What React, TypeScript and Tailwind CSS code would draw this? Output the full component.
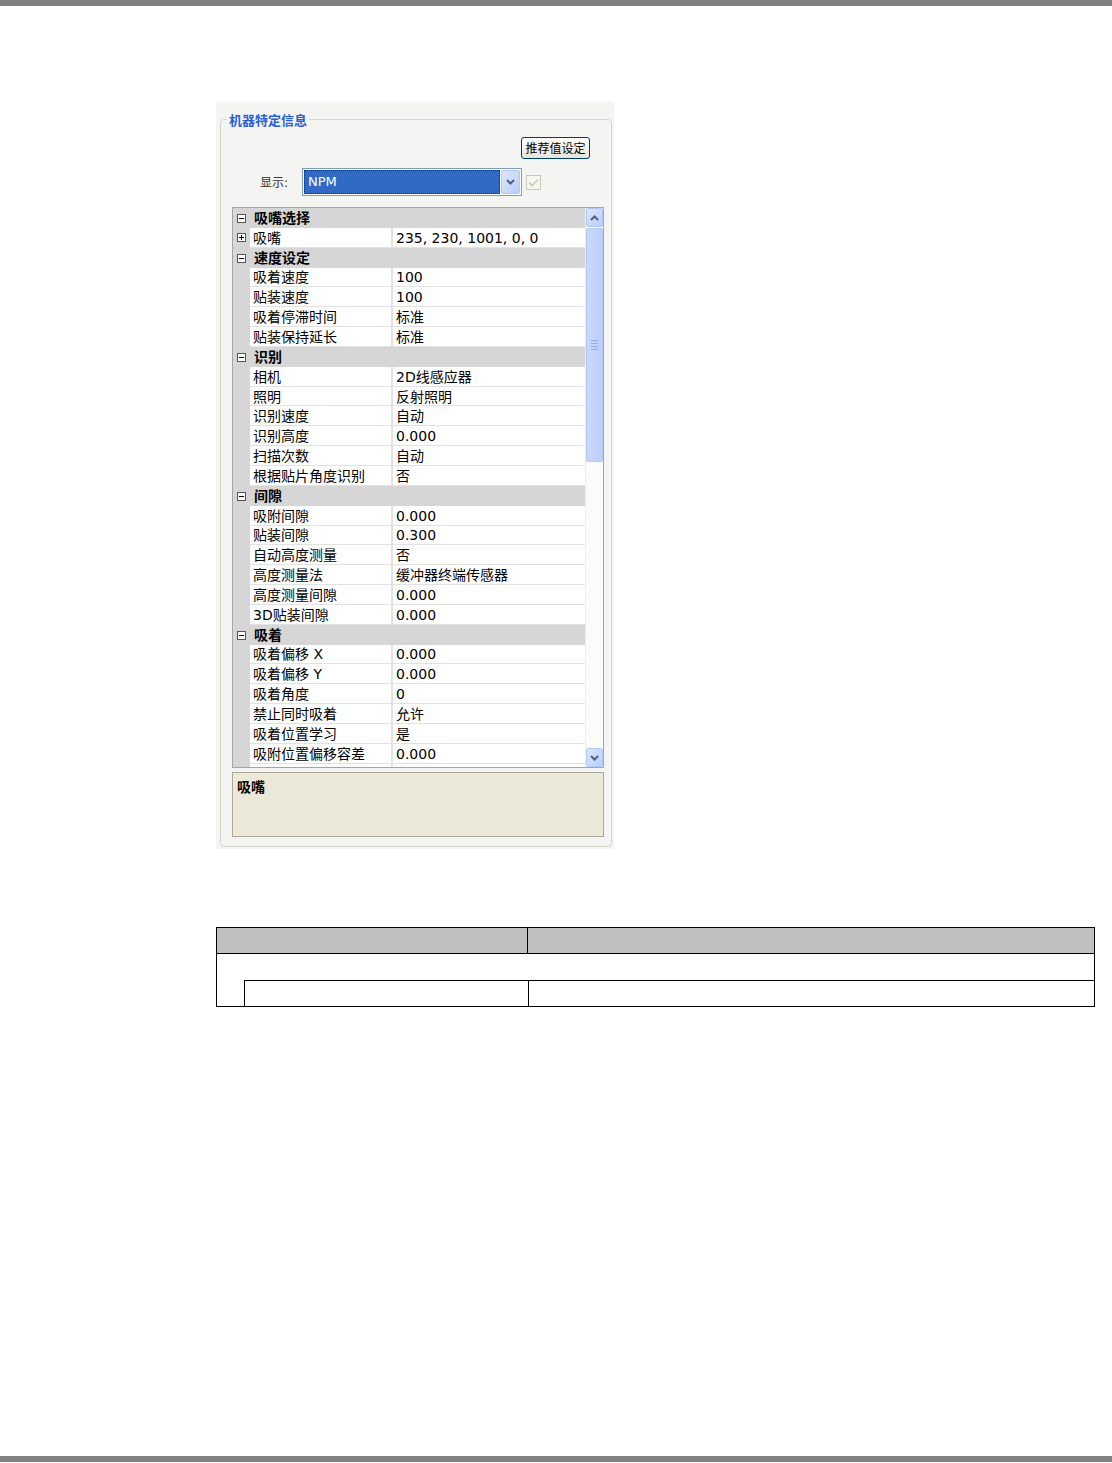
import React from 'react';

type Row =
    | { kind: 'cat'; label: string }
    | { kind: 'prop'; label: string; value: string; expand?: boolean };

const rows: Row[] = [
    { kind: 'cat', label: '吸嘴选择' },
    { kind: 'prop', label: '吸嘴', value: '235, 230, 1001, 0, 0', expand: true },
    { kind: 'cat', label: '速度设定' },
    { kind: 'prop', label: '吸着速度', value: '100' },
    { kind: 'prop', label: '贴装速度', value: '100' },
    { kind: 'prop', label: '吸着停滞时间', value: '标准' },
    { kind: 'prop', label: '贴装保持延长', value: '标准' },
    { kind: 'cat', label: '识别' },
    { kind: 'prop', label: '相机', value: '2D线感应器' },
    { kind: 'prop', label: '照明', value: '反射照明' },
    { kind: 'prop', label: '识别速度', value: '自动' },
    { kind: 'prop', label: '识别高度', value: '0.000' },
    { kind: 'prop', label: '扫描次数', value: '自动' },
    { kind: 'prop', label: '根据贴片角度识别', value: '否' },
    { kind: 'cat', label: '间隙' },
    { kind: 'prop', label: '吸附间隙', value: '0.000' },
    { kind: 'prop', label: '贴装间隙', value: '0.300' },
    { kind: 'prop', label: '自动高度测量', value: '否' },
    { kind: 'prop', label: '高度测量法', value: '缓冲器终端传感器' },
    { kind: 'prop', label: '高度测量间隙', value: '0.000' },
    { kind: 'prop', label: '3D贴装间隙', value: '0.000' },
    { kind: 'cat', label: '吸着' },
    { kind: 'prop', label: '吸着偏移 X', value: '0.000' },
    { kind: 'prop', label: '吸着偏移 Y', value: '0.000' },
    { kind: 'prop', label: '吸着角度', value: '0' },
    { kind: 'prop', label: '禁止同时吸着', value: '允许' },
    { kind: 'prop', label: '吸着位置学习', value: '是' },
    { kind: 'prop', label: '吸附位置偏移容差', value: '0.000' },
    { kind: 'prop', label: '检查位置偏移', value: '0.000' },
];

function ToggleBox({ plus }: { plus?: boolean }) {
    return (
        <svg width="9" height="9" viewBox="0 0 9 9" className="shrink-0">
            <rect x="0.5" y="0.5" width="8" height="8" fill="#fff" stroke="#555" />
            <line x1="2" y1="4.5" x2="7" y2="4.5" stroke="#000" />
            {plus && <line x1="4.5" y1="2" x2="4.5" y2="7" stroke="#000" />}
        </svg>
    );
}

function Chevron({ up }: { up?: boolean }) {
    return (
        <svg width="9" height="6" viewBox="0 0 9 6">
            <path d={up ? 'M1 5 L4.5 1.5 L8 5' : 'M1 1 L4.5 4.5 L8 1'}
                fill="none" stroke="#4d6185" strokeWidth="2" />
        </svg>
    );
}

function ScrollButton({ up }: { up?: boolean }) {
    return (
        <div className="h-[19px] w-full flex items-center justify-center rounded-[2px] border border-[#b4c8f6] bg-gradient-to-br from-[#dde7fd] to-[#b9cdf8]">
            <Chevron up={up} />
        </div>
    );
}

function PropertyGrid() {
    return (
        <div className="mt-[11px] ml-[11px] w-[372px] h-[561px] border border-[#a5a5a5] bg-white flex overflow-hidden">
            <div className="flex-1 flex flex-col overflow-hidden">
                {rows.map((r, i) =>
                    r.kind === 'cat' ? (
                        <div key={i} className="h-[19.85px] shrink-0 flex items-center bg-[#d6d6d6] pl-[4px] pt-px gap-[8px]">
                            <ToggleBox />
                            <span className="font-bold text-[14px] leading-none text-black">{r.label}</span>
                        </div>
                    ) : (
                        <div key={i} className="h-[19.85px] shrink-0 flex">
                            <div className="w-[17px] shrink-0 bg-[#d6d6d6] flex items-center pl-[4px]">
                                {r.expand && <ToggleBox plus />}
                            </div>
                            <div className="w-[143px] shrink-0 flex items-center pl-[3px] pt-px border-r-2 border-b border-[#e2e2e2] text-[14px] leading-none whitespace-nowrap">
                                {r.label}
                            </div>
                            <div className="flex-1 flex items-center pl-[3px] pt-px border-b border-[#e2e2e2] text-[14px] leading-none whitespace-nowrap">
                                {r.value}
                            </div>
                        </div>
                    )
                )}
            </div>
            <div className="w-[18px] shrink-0 flex flex-col bg-[#fbfbf8] border-l border-[#ededea]">
                <ScrollButton up />
                <div className="flex-1 flex flex-col pt-[1px]">
                    <div className="h-[234px] rounded-[2px] border border-[#b4c8f6] bg-gradient-to-r from-[#c9d8fc] to-[#bdd0fa] flex flex-col items-center justify-center gap-[2px]">
                        <div className="w-[7px] h-px bg-[#8faaf0]" />
                        <div className="w-[7px] h-px bg-[#8faaf0]" />
                        <div className="w-[7px] h-px bg-[#8faaf0]" />
                        <div className="w-[7px] h-px bg-[#8faaf0]" />
                    </div>
                </div>
                <ScrollButton />
            </div>
        </div>
    );
}

export default function App() {
    return (
        <div className="w-[1112px] h-[1463px] bg-white flex flex-col font-['DejaVu_Sans','Noto_Sans_CJK_SC',sans-serif] text-black">
            <div className="h-[6px] bg-[#808080] shrink-0" />

            {/* machine specific info panel */}
            <div className="mt-[96px] ml-[216px] w-[398px] bg-[#f4f4f3] pt-[17px] pl-[4px] pr-[2px] pb-[2px]">
                <div className="relative w-[392px] h-[728px] border border-[#d5d5c9] rounded-[4px] flex flex-col">
                    <div className="absolute -top-[7px] left-[6px] px-[2px] bg-[#f4f4f3] text-[13px] font-bold leading-[16px] text-[#2c5ed6]">
                        机器特定信息
                    </div>

                    <div className="mt-[17px] flex justify-end pr-[21px]">
                        <button className="w-[69px] h-[22px] rounded-[3px] border border-[#003c74] bg-gradient-to-b from-white to-[#e6e4d8] text-[12px] leading-none pt-px text-black">
                            推荐值设定
                        </button>
                    </div>

                    <div className="mt-[9px] flex items-center pl-[39px]">
                        <span className="w-[42px] text-[12px] pt-px text-[#333]">显示:</span>
                        <div className="w-[220px] h-[28px] border border-[#7f9db9] bg-white flex items-center p-[1px] gap-[1px]">
                            <div className="flex-1 h-full bg-[#316ac5] border border-dotted border-[#0b2a66] flex items-center pl-[3px] text-[13px] text-white">
                                NPM
                            </div>
                            <div className="w-[19px] h-full rounded-[2px] border border-[#b4c8f6] bg-gradient-to-br from-[#dde7fd] to-[#b9cdf8] flex items-center justify-center">
                                <Chevron />
                            </div>
                        </div>
                        <div className="ml-[4px] w-[15px] h-[15px] border border-[#cac8bb] bg-[#f6f5ee] flex items-center justify-center">
                            <svg width="11" height="9" viewBox="0 0 11 9">
                                <path d="M1 4.5 L4 7.5 L10 1.5" fill="none" stroke="#cac8bb" strokeWidth="1.6" />
                            </svg>
                        </div>
                    </div>

                    <PropertyGrid />

                    <div className="mt-[4px] ml-[11px] w-[372px] h-[65px] border border-[#aca899] bg-[#ece9d8] px-[4px] pt-[2px]">
                        <span className="font-bold text-[14px] leading-[16px]">吸嘴</span>
                    </div>
                </div>
            </div>

            {/* empty table */}
            <div className="mt-[78px] ml-[216px] w-[879px] border border-black flex flex-col">
                <div className="h-[26px] flex bg-[#c0c0c0] border-b border-black">
                    <div className="w-[311px] border-r border-black" />
                    <div className="flex-1" />
                </div>
                <div className="h-[26px]" />
                <div className="h-[26px] flex">
                    <div className="w-[27px] shrink-0" />
                    <div className="flex-1 flex border-l border-t border-black">
                        <div className="w-[284px] border-r border-black" />
                        <div className="flex-1" />
                    </div>
                </div>
            </div>

            <div className="mt-auto mb-[1px] h-[6px] bg-[#808080] shrink-0" />
        </div>
    );
}
